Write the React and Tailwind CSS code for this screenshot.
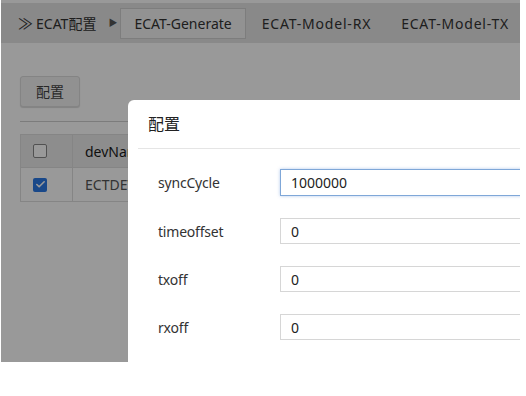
import { Check } from 'lucide-react';

const font = { fontFamily: '"Noto Sans", "Noto Sans CJK SC", sans-serif' };

const tabs = ['ECAT-Generate', 'ECAT-Model-RX', 'ECAT-Model-TX'];

const fields = [
  { label: 'syncCycle', value: '1000000', focused: true },
  { label: 'timeoffset', value: '0' },
  { label: 'txoff', value: '0' },
  { label: 'rxoff', value: '0' },
];

const Page = () => (
  <div className="flex flex-col h-full">
    <div className="h-[3px] bg-white" />
    <div className="h-10 bg-[#e4e4e4] flex items-center pl-[17px] text-[14px] text-[#333] whitespace-nowrap overflow-hidden">
      <span className="shrink-0 mr-[3px] text-[15px] leading-none">≫</span>
      <span className="shrink-0">ECAT配置</span>
      <span className="shrink-0 ml-[12px] mr-[3px] text-[9px] text-[#555]">▶</span>
      {tabs.map((t, i) => (
        <span
          key={t}
          className={
            i === 0
              ? 'shrink-0 h-[31px] px-[13px] flex items-center bg-[#f3f3f3] border border-[#d0d0d0] text-[#333]'
              : 'shrink-0 h-[31px] flex items-center ml-[16px] mr-[14px] text-[#333] tracking-[0.8px]'
          }
        >
          {t}
        </span>
      ))}
    </div>
    <div className="pl-[19px] pt-[33px]">
      <button className="h-[31px] w-[60px] rounded-[3px] border border-[#dcdcdc] bg-[#f2f2f2] text-[14px] text-[#444] shadow-[0_1px_1px_rgba(0,0,0,0.15)]">
        配置
      </button>
      <div className="mt-[14px] border-t border-[#cfcfcf]" />
      <div className="mt-[12px] border border-[#dedede] text-[14px] text-[#333]">
        <div className="flex h-[33px] bg-[#ebebeb] border-b border-[#dedede]">
          <div className="w-[52px] border-r border-[#dedede] flex items-center pl-[12px]">
            <span className="w-[14px] h-[14px] rounded-[2px] border border-[#888] bg-white" />
          </div>
          <div className="pl-[12px] flex items-center text-[#1a1a1a]">devName</div>
        </div>
        <div className="flex h-[33px] bg-white">
          <div className="w-[52px] border-r border-[#dedede] flex items-center pl-[12px]">
            <span className="w-[14px] h-[14px] rounded-[2px] bg-[#2a78e4] flex items-center justify-center">
              <Check size={11} strokeWidth={3.5} color="white" />
            </span>
          </div>
          <div className="pl-[12px] flex items-center text-[#555]">ECTDEV0</div>
        </div>
      </div>
    </div>
  </div>
);

const Modal = () => (
  <div
    className="absolute left-[127px] top-[100px] w-[480px] h-[300px] bg-white rounded-tl-[6px] text-[#333]"
    style={font}
  >
    <div className="h-[49px] flex items-center pl-[10px] text-[16px] text-[#222] border-b border-[#e5e5e5] ml-[10px]">
      配置
    </div>
    <div className="flex flex-col gap-[22px] pt-[20px]">
      {fields.map((f) => (
        <div key={f.label} className="flex items-center text-[14px]">
          <div className="w-[152px] pl-[30px] tracking-[-0.2px]">{f.label}</div>
          <div
            className={
              f.focused
                ? 'h-[27px] flex-1 border border-[#7fa7d8] shadow-[0_0_3px_rgba(102,150,220,0.5)] flex items-center pl-[10px] text-[#222]'
                : 'h-[26px] flex-1 border border-[#d6d6d6] flex items-center pl-[10px] text-[#222]'
            }
          >
            {f.value}
          </div>
        </div>
      ))}
    </div>
  </div>
);

const App = () => (
  <div className="w-[526px] h-[396px] bg-white" style={font}>
    <div className="relative w-[519px] h-[362px] overflow-hidden bg-white ml-px">
      <Page />
      <div className="absolute inset-0 bg-black/40" />
      <Modal />
    </div>
  </div>
);

export default App;
